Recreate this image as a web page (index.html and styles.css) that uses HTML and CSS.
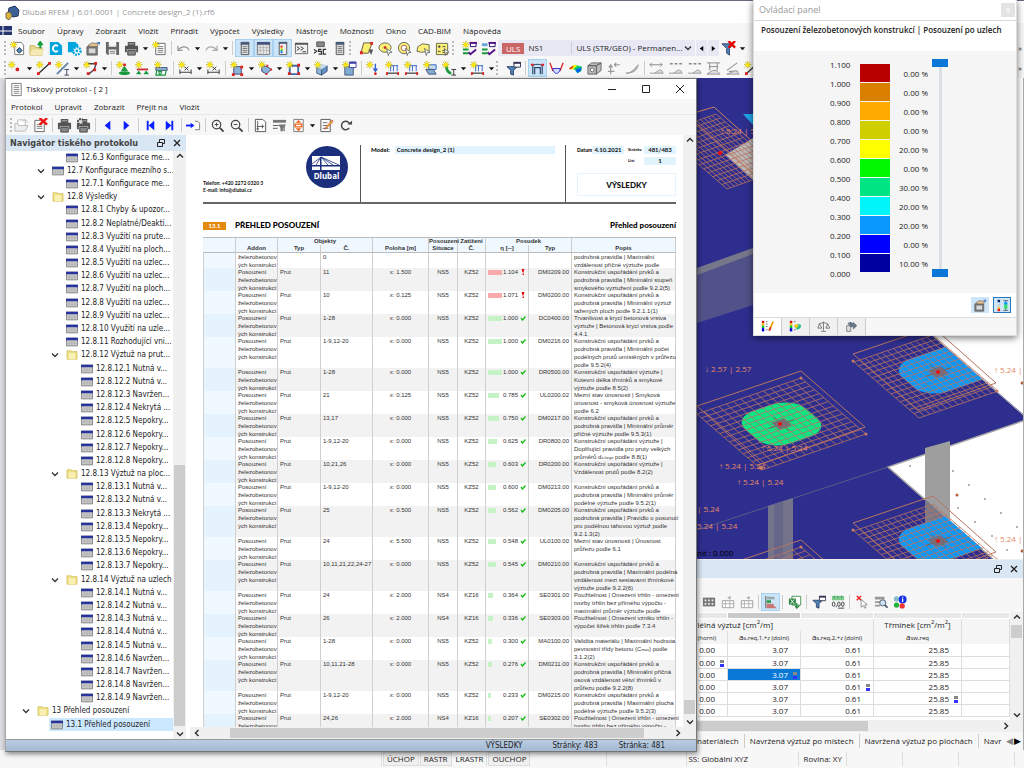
FILE: index.html
```html
<!DOCTYPE html>
<html lang="cs">
<head>
<meta charset="utf-8">
<title>Dlubal RFEM | 6.01.0001 | Concrete design_2 (1).rf6</title>
<link rel="stylesheet" href="styles.css">
</head>
<body>
<svg class="defs" aria-hidden="true">
  <symbol id="star" viewBox="0 0 16 16"><path d="M4 0v8M0 4h8M1 1l6 6M7 1L1 7" stroke="#c9b800" stroke-width="1"/><circle cx="4" cy="4" r="2" fill="#ffe800"/></symbol>
  <symbol id="caret" viewBox="0 0 8 8"><path d="M1 2.500h6L4 6z" fill="#111"/></symbol>
  <symbol id="chev" viewBox="0 0 8 8"><path d="M1 2.500l3 3 3-3" fill="none" stroke="#333" stroke-width="1.300"/></symbol>
  <symbol id="newm" viewBox="0 0 16 16"><path d="M5 1.500h7l2.500 3v10H5z" fill="#fff" stroke="#777"/><path d="M7 10l3-3 3 3-3 3z" fill="#4f86b8" stroke="#234"/><use href="#star"/></symbol>
  <symbol id="open" viewBox="0 0 16 16"><path d="M1 5h5l1 2h7v8H1z" fill="#e9d98e" stroke="#c9b45c"/><path d="M3 9h13l-2 6H1z" fill="#f5eab5"/><path d="M12 8V2M9.500 4.500L12 1l2.500 3.500" stroke="#159a3c" stroke-width="2" fill="none"/></symbol>
  <symbol id="cc" viewBox="0 0 16 16"><path d="M2 1h9l4 4v10H2z" fill="#00a5dd"/><path d="M10.500 5.500A3.200 3.200 0 1 0 10.500 10.500" fill="none" stroke="#fff" stroke-width="2"/></symbol>
  <symbol id="cg" viewBox="0 0 16 16"><path d="M1 1h8l3 3v8H1z" fill="#00a5dd"/><circle cx="10.500" cy="10.500" r="4" fill="#fff" stroke="#00a5dd" stroke-width="2.500" stroke-dasharray="2 1"/><circle cx="10.500" cy="10.500" r="1.500" fill="#00a5dd"/></symbol>
  <symbol id="box" viewBox="0 0 16 16"><path d="M1 6h11v9H1z" fill="#777" stroke="#666"/><path d="M3 8h7v5H3z" fill="#d8d8d8"/><path d="M2 5l4-3 7 1-1 3H5z" fill="#e8c090" stroke="#555" stroke-width=".7"/><path d="M11 1h4v3z" fill="#3b7ac9"/></symbol>
  <symbol id="save" viewBox="0 0 16 16"><path d="M1 1h14v14H3l-2-2z" fill="#666"/><path d="M4 1h8v5H4zM4 9h8v6H4z" fill="#f4f4f4"/><path d="M5 11h6M5 13h6" stroke="#777"/></symbol>
  <symbol id="print" viewBox="0 0 16 16"><path d="M4 1h8v4H4zM1 5h14v7h-2V9H3v3H1z" fill="#555"/><path d="M4 10h8v5H4z" fill="#888" stroke="#444"/><path d="M5 3h6" stroke="#bbb"/></symbol>
  <symbol id="docn" viewBox="0 0 16 16"><path d="M4 2.500h10v12H4z" fill="#fff" stroke="#666"/><path d="M6 6h6M6 8h6M6 10h6M6 12h6" stroke="#777"/><use href="#star"/></symbol>
  <symbol id="undo" viewBox="0 0 16 16"><path d="M2 5v5h5M2.500 9.500C6 5 12 5 14 10" fill="none" stroke="#999" stroke-width="1.300"/></symbol>
  <symbol id="redo" viewBox="0 0 16 16"><path d="M14 5v5H9M13.500 9.500C10 5 4 5 2 10" fill="none" stroke="#aaa" stroke-width="1.300"/></symbol>
  <symbol id="pan" viewBox="0 0 16 16"><path d="M4.500 1.500h8v13h-8z" fill="#ddd" stroke="#555"/><path d="M4 1h9v3H4z" fill="#4a5a7a"/><path d="M6 6h5M6 8h5M6 10h5M6 12h5" stroke="#777"/></symbol>
  <symbol id="tab" viewBox="0 0 16 16"><path d="M1.500 2.500h13v12h-13z" fill="#e4e4e4" stroke="#777"/><path d="M1 1h14v3H1z" fill="#44517d"/><path d="M4.500 4v10M8 4v10M11.500 4v10M2 7h12M2 10h12" stroke="#aaa" stroke-width=".7"/></symbol>
  <symbol id="pal" viewBox="0 0 16 16"><path d="M4.500 1.500h8v13h-8z" fill="#eee" stroke="#555"/><path d="M4 1h9v2H4z" fill="#4a5a7a"/><path d="M6 5h2v2H6z" fill="red"/><path d="M6 7h2v2H6z" fill="#f5d400"/><path d="M6 9h2v2H6z" fill="#0b3"/><path d="M6 11h2v2H6z" fill="#06f"/></symbol>
  <symbol id="con" viewBox="0 0 16 16"><path d="M1.500 2.500h13v11h-13z" fill="#f2f2f2" stroke="#666"/><path d="M1 2h14v2H1z" fill="#555"/><path d="M3 6l3 2-3 2M7 6l3 2-3 2M9 11.500h4" fill="none" stroke="#333"/></symbol>
  <symbol id="sc" viewBox="0 0 16 16"><path d="M4 1h8v5H4z" fill="#888" stroke="#555"/><path d="M1 9l3 2-3 2M9 9H6v2h3v3H6M14 9h-3v5h3" fill="none" stroke="#333" stroke-width="1.300"/></symbol>
  <symbol id="yel" viewBox="0 0 16 16"><path d="M5 2h9l-4 11H2z" fill="#f8ee70" stroke="#654" /><path d="M12 1h3v3h-3zM1 11h3v3H1z" fill="#d22"/><path d="M10 9h5l-2 6z" fill="#555"/></symbol>
  <symbol id="cir" viewBox="0 0 16 16"><ellipse cx="7.500" cy="7" rx="6.500" ry="5" fill="#fbf07a" stroke="#665"/><circle cx="7.500" cy="7" r="1.500" fill="#c22"/><path d="M9 8l6 4-3 .5-1 3z" fill="#fff" stroke="#555" stroke-width=".8"/></symbol>
  <symbol id="rin" viewBox="0 0 16 16"><circle cx="7.500" cy="7.500" r="6" fill="#fbf07a" stroke="#665"/><circle cx="7.500" cy="7.500" r="3" fill="#fff" stroke="#a66"/><path d="M9 8l6 4-3 .5-1 3z" fill="#fff" stroke="#555" stroke-width=".8"/></symbol>
  <symbol id="hul" viewBox="0 0 16 16"><path d="M2 6l5-3 7 1v7l-8 1-5-1z" fill="#fbf07a" stroke="#665"/><path d="M9 8l6 4-3 .5-1 3z" fill="#fff" stroke="#555" stroke-width=".8"/></symbol>
  <symbol id="cal" viewBox="0 0 16 16"><path d="M1.500 2.500h12v12h-12z" fill="#fbf07a" stroke="#665"/><path d="M3 6h3M4.500 4.500v3M8 6h3M3 11h3M8 10h3M8 12h3" stroke="#444"/><path d="M10 8l5 4-3 .5-1 3z" fill="#fff" stroke="#555" stroke-width=".8"/></symbol>
  <symbol id="lod" viewBox="0 0 16 16"><path d="M9 2h6v4H9z" fill="#fff" stroke="#206"/><path d="M8 1h8v2H8z" fill="#518"/><path d="M1 8h6v2H1zM1 12h6v2H1z" fill="#1a9a3a"/><path d="M7 12l2 2 6-5" fill="none" stroke="#518" stroke-width="2"/><use href="#star"/></symbol>
  <symbol id="lo2" viewBox="0 0 16 16"><path d="M9 2h6v4H9z" fill="#fff" stroke="#206"/><path d="M8 1h8v2H8z" fill="#518"/><path d="M7 12l2 2 6-5" fill="none" stroke="#518" stroke-width="2"/><path d="M1 8h6v2H1zM1 12h6v2H1z" fill="#1a9a3a"/><path d="M1 4h6" stroke="#68a4d8" stroke-width="3"/></symbol>
  <symbol id="fx" viewBox="0 0 16 16"><path d="M1 3h12L9 8v7l-3-2V8z" fill="#4d84b8" stroke="#346"/><path d="M8 0l7 7M15 0L8 7" stroke="#e00" stroke-width="2.500"/></symbol>
  <symbol id="nod" viewBox="0 0 16 16"><use href="#star"/><circle cx="10" cy="9" r="2" fill="#d22"/></symbol>
  <symbol id="lin" viewBox="0 0 16 16"><path d="M3 13L14 3" stroke="#333" stroke-width="1.500"/><path d="M1 12h3v3H1zM13 1h3v3h-3z" fill="#d22"/><use href="#star"/></symbol>
  <symbol id="mem" viewBox="0 0 16 16"><path d="M2 14L14 2" stroke="#68a" stroke-width="2"/><path d="M10 9h5M10 15h5M12.500 9v6" stroke="#446"/><use href="#star"/></symbol>
  <symbol id="arc" viewBox="0 0 16 16"><path d="M5 3h9l-2 6-6 5" fill="none" stroke="#444" stroke-width="1.500"/><path d="M12 1h3v3h-3zM11 8h3v3h-3zM4 12h3v3H4z" fill="#d22"/><use href="#star"/></symbol>
  <symbol id="sup" viewBox="0 0 16 16"><path d="M9 5l4 6H5z" fill="#1c9a40"/><ellipse cx="9" cy="13" rx="6" ry="2" fill="#1c9a40"/><circle cx="9" cy="4" r="1.700" fill="#d22"/><use href="#star"/></symbol>
  <symbol id="sp2" viewBox="0 0 16 16"><path d="M2 9h12" stroke="#c33" stroke-width="2"/><path d="M4 10l3 4H1zM12 10l3 4H9z" fill="#1c9a40"/><use href="#star"/></symbol>
  <symbol id="sp3" viewBox="0 0 16 16"><path d="M2 7h12v3H2z" fill="#8db2d6" stroke="#457"/><path d="M3 10l-1 5h4l-1-4h3l-1 4h5l1-5" fill="none" stroke="#1c9a40" stroke-width="1.300"/><use href="#star"/></symbol>
  <symbol id="dim" viewBox="0 0 16 16"><path d="M2 12h12M2 9v5M14 9v5" stroke="#333"/><path d="M7 6l4 4M11 6l-4 4" stroke="#333"/><use href="#star"/></symbol>
  <symbol id="srf" viewBox="0 0 16 16"><path d="M4 6h8v8H4z" fill="#89b3d8" stroke="#447"/><path d="M2 13h3v3H2zM11 13h3v3h-3zM11 5h3v3h-3z" fill="#d22"/><use href="#star"/></symbol>
  <symbol id="sr2" viewBox="0 0 16 16"><path d="M4 5l6 1 4 3-5 5-5-3z" fill="#89b3d8" stroke="#447"/><path d="M13 8h2v2h-2zM8 13h2v2H8zM9 4h2v2H9z" fill="#d22"/><use href="#star"/></symbol>
  <symbol id="sr3" viewBox="0 0 16 16"><path d="M4 5h9v9H4z" fill="#fff" stroke="#3a6ea8" stroke-width="2"/><path d="M2 12h3v3H2zM12 12h3v3h-3zM12 3h3v3h-3z" fill="#d22"/><use href="#star"/></symbol>
  <symbol id="sol" viewBox="0 0 16 16"><path d="M3 7l5 2v6l-5-2z" fill="#8fb8dd" stroke="#457"/><path d="M8 9l6-4v6l-6 4z" fill="#5d92c6" stroke="#457"/><path d="M3 7l6-4 5 2-6 4z" fill="#c2dbf0"/><use href="#star"/></symbol>
  <symbol id="cub" viewBox="0 0 16 16"><path d="M3 6h9v9H3z" fill="#7faad4" stroke="#457"/><path d="M8 1h7v6H8z" fill="#fff" stroke="#44a"/><path d="M8 1h7v2H8z" fill="#44a"/><use href="#star"/></symbol>
  <symbol id="ld1" viewBox="0 0 16 16"><path d="M10 3v8M8 8l2 3 2-3" stroke="#36c" stroke-width="1.500" fill="none"/><circle cx="10" cy="13.500" r="1.500" fill="#d22"/><use href="#star"/></symbol>
  <symbol id="ld2" viewBox="0 0 16 16"><path d="M5 5h9M6 5v6M9 5v6M13 5v6" stroke="#36c"/><path d="M2 13h13" stroke="#555" stroke-width="1.500"/><path d="M1 12h2v3H1zM13 12h2v3h-2z" fill="#d22"/><use href="#star"/></symbol>
  <symbol id="ld3" viewBox="0 0 16 16"><path d="M6 4h8v5H6z" fill="#c6daee" stroke="#36c"/><path d="M3 9h8l3 5H6z" fill="#83abd2" stroke="#457"/><use href="#star"/></symbol>
  <symbol id="ld4" viewBox="0 0 16 16"><path d="M4 4c1 7 3 9 6 9" stroke="#1c9a40" stroke-width="3" fill="none"/><path d="M10 9h5M10 15h5M12.500 9v6" stroke="#333"/><use href="#star"/></symbol>
  <symbol id="fil" viewBox="0 0 16 16"><path d="M1 6h11L8 10v5l-3-1v-4z" fill="#4d84b8" stroke="#346"/><path d="M8.500 1.500h7v5h-7z" fill="#fff" stroke="#335"/><path d="M8 1h8v2H8z" fill="#335"/></symbol>
  <symbol id="def" viewBox="0 0 16 16"><path d="M3 14V5c2-2 8-2 10 0v9M5 14V7h6v7" fill="none" stroke="#26406a" stroke-width="1.200"/><path d="M1 3h3v2H1zM12 3h3v2h-3z" fill="#d22"/></symbol>
  <symbol id="mom" viewBox="0 0 16 16"><path d="M1 2l3 8 4-2 4 2 3-8" fill="none" stroke="#d22" stroke-width="1.500"/><path d="M4 8c1 7 7 7 8 0z" fill="#d0dcff" stroke="#33c"/></symbol>
  <symbol id="rbw" viewBox="0 0 16 16"><path d="M1 8l6-4 8 2-1 5-4 2-3-4z" fill="#0c6"/><path d="M1 8l6-4 3 1-5 4z" fill="#ff0"/><path d="M1 8l4-3 1 1-3 3z" fill="#f30"/><path d="M8 9l6-2v3l-4 3z" fill="#06f"/></symbol>
  <symbol id="msh" viewBox="0 0 16 16"><path d="M1 5h9v9H1zM1 5l4-3h10l-5 3zM15 2v8l-5 4V5z" fill="#bbb" stroke="#666"/><circle cx="5.500" cy="9.500" r="2" fill="#fff" stroke="#666"/></symbol>
  <symbol id="arr" viewBox="0 0 16 16"><path d="M5 14V5M3 7l2-3 2 3M2 11h7M15 4H9M11 2L9 4l2 2" fill="none" stroke="#999" stroke-width="1.300"/></symbol>
  <symbol id="wdg" viewBox="0 0 16 16"><path d="M1 13c5 0 8-3 13-9-1 6-5 9-13 9z" fill="#bbb" stroke="#999"/></symbol>
  <symbol id="sec" viewBox="0 0 16 16"><path d="M1 4h13M3 2L1 4l2 2M12 2l2 2-2 2" fill="none" stroke="#888"/><path d="M1 13h14c-1-4-4-4-6-2l-3 2" fill="#ddd" stroke="#999"/></symbol>
  <symbol id="se2" viewBox="0 0 16 16"><path d="M2 3h3M7 3h3M12 3h3" stroke="#888" stroke-width="1.500"/><path d="M1 13h14c-1-4-4-4-6-2l-3 2" fill="#ddd" stroke="#999"/></symbol>
  <symbol id="se3" viewBox="0 0 16 16"><path d="M1 2h14M3 6h10M4 2v8M12 2v8" stroke="#888"/><path d="M1 14h14l-4-4H7z" fill="#ddd" stroke="#999"/></symbol>
  <symbol id="se4" viewBox="0 0 16 16"><path d="M2 10L13 2M4 11h10" stroke="#999" stroke-width="1.300"/><path d="M2 14h13l-3-4z" fill="#ddd" stroke="#999"/></symbol>
  <symbol id="doc" viewBox="0 0 16 16"><path d="M3 1.500h10v13H3z" fill="#fff" stroke="#777"/><path d="M5 4h6M5 6h6M5 8h6M5 10h6M5 12h6" stroke="#888"/></symbol>
  <symbol id="popen" viewBox="0 0 16 16"><path d="M4 2h8v6H4z" fill="#fff" stroke="#bbb"/><path d="M1 6h3l1 2h10l-3 6H1z" fill="#eee" stroke="#bbb"/><path d="M9 4c2-3 5-2 5 1" stroke="#bbb" fill="none"/></symbol>
  <symbol id="pdel" viewBox="0 0 16 16"><path d="M2 2.500h10v12H2z" fill="#fff" stroke="#666"/><path d="M4 7h6M4 9h6M4 11h6" stroke="#777"/><path d="M7 0l8 7M15 0L7 7" stroke="#e11" stroke-width="2.500"/></symbol>
  <symbol id="pset" viewBox="0 0 16 16"><use href="#print"/><circle cx="5" cy="4" r="3" fill="#ddd" stroke="#444" stroke-width="2" stroke-dasharray="2 1"/></symbol>
  <symbol id="prv" viewBox="0 0 16 16"><path d="M11 3v10L5 8z" fill="#0a1fff"/></symbol>
  <symbol id="nxt" viewBox="0 0 16 16"><path d="M5 3v10l6-5z" fill="#0a1fff"/></symbol>
  <symbol id="fst" viewBox="0 0 16 16"><path d="M12 3v10L6 8zM4 3h2v10H4z" fill="#0a1fff"/></symbol>
  <symbol id="lst" viewBox="0 0 16 16"><path d="M4 3v10l6-5zM10 3h2v10h-2z" fill="#0a1fff"/></symbol>
  <symbol id="gto" viewBox="0 0 16 16"><path d="M0 8h6" stroke="#0a1fff" stroke-width="2"/><path d="M5 5l4 3-4 3z" fill="#0a1fff"/><path d="M9.500 3.500h3l2 2v7h-5" fill="#fff" stroke="#777"/></symbol>
  <symbol id="zin" viewBox="0 0 16 16"><circle cx="7" cy="7" r="4.500" fill="none" stroke="#444" stroke-width="1.300"/><path d="M10.500 10.500l4 4" stroke="#444" stroke-width="2"/><path d="M5 7h4M7 5v4" stroke="#444"/></symbol>
  <symbol id="zou" viewBox="0 0 16 16"><circle cx="7" cy="7" r="4.500" fill="none" stroke="#444" stroke-width="1.300"/><path d="M10.500 10.500l4 4" stroke="#444" stroke-width="2"/><path d="M5 7h4" stroke="#444"/></symbol>
  <symbol id="pg" viewBox="0 0 16 16"><path d="M2.500 1.500h8l3 3v10h-11z" fill="#fff" stroke="#555"/><path d="M5 3v10M4 11l1 2 1-2M4 9h8M10 7v4" stroke="#555" fill="none"/></symbol>
  <symbol id="hd" viewBox="0 0 16 16"><path d="M1 2h14v3H1z" fill="#777"/><path d="M1 8h6M1 11h5M13 8v6" stroke="#555"/><path d="M7 7h8l-3 4v3H9v-3z" fill="#777"/></symbol>
  <symbol id="fit" viewBox="0 0 16 16"><path d="M3 1.500h10v13H3z" fill="#fff" stroke="#777"/><path d="M8 2l3 3H5zM8 14l3-3H5z" fill="#e8641b"/><path d="M4.500 6.500h7v3h-7z" fill="#fff" stroke="#e8641b" stroke-width="1.500"/></symbol>
  <symbol id="edt" viewBox="0 0 16 16"><path d="M2 1.500h10v13H2z" fill="#fff" stroke="#555"/><path d="M4 5h5M4 8h5M4 11h6" stroke="#666"/><path d="M14 2l1 2-7 7-2 1 1-2z" fill="#f2b632" stroke="#b33" stroke-width=".6"/></symbol>
  <symbol id="ref" viewBox="0 0 16 16"><path d="M12 10.500a4.500 4.500 0 1 1 .5-4" fill="none" stroke="#444" stroke-width="1.500"/><path d="M10 7h5V3z" fill="#444"/></symbol>
  <symbol id="t" viewBox="0 0 14 10"><path d="M.5.500h13v9H.5z" fill="#d2d2d2" stroke="#777"/><path d="M0 0h14v3H0z" fill="#26349c"/><path d="M4 3v6M7 3v6M10 3v6M1 5h12M1 7h12" stroke="#aaa" stroke-width=".7"/></symbol>
  <symbol id="f" viewBox="0 0 14 12"><path d="M1 1h5l1 1h6v9H1z" fill="#efe28a" stroke="#d2bf5a"/><path d="M3 4h8v7H3z" fill="#f8f0b4"/></symbol>
  <symbol id="res" viewBox="0 0 10 10"><path d="M1.500 4.500h5v4h-5zM3.500 4v-2.500h5v4h-2" fill="none" stroke="#222"/></symbol>
  <symbol id="x" viewBox="0 0 10 10"><path d="M2 2l6 6M8 2l-6 6" stroke="#222" stroke-width="1.300"/></symbol>
  <symbol id="up" viewBox="0 0 10 10"><path d="M2 6.500l3-3 3 3" fill="none" stroke="#333" stroke-width="1.500"/></symbol>
  <symbol id="dn" viewBox="0 0 10 10"><path d="M2 3.500l3 3 3-3" fill="none" stroke="#333" stroke-width="1.500"/></symbol>
  <symbol id="lf" viewBox="0 0 10 10"><path d="M6.500 2l-3 3 3 3" fill="none" stroke="#333" stroke-width="1.500"/></symbol>
  <symbol id="rt" viewBox="0 0 10 10"><path d="M3.500 2l3 3-3 3" fill="none" stroke="#333" stroke-width="1.500"/></symbol>
  <symbol id="ok" viewBox="0 0 6 6"><path d="M1 3l1.500 2L5.500 1.500" fill="none" stroke="#16b816" stroke-width="1.300"/></symbol>
  <symbol id="ng" viewBox="0 0 6 6"><path d="M1.500 0h3L3.500 3.500h-1zM2.500 4.500h1.500V6H2.500z" fill="#e51414"/></symbol>
  <symbol id="tg" viewBox="0 0 16 16"><path d="M1 3h14v10H1z" fill="#777"/><path d="M3 5h2v2H3zM7 5h2v2H7zM11 5h2v2h-2zM3 9h2v2H3zM7 9h2v2H7zM11 9h2v2h-2z" fill="#eee"/></symbol>
  <symbol id="t2" viewBox="0 0 16 16"><path d="M1.500 6.500h13v8h-13z" fill="#fff" stroke="#999"/><path d="M1 10h14M5 7v7M10 7v7" stroke="#aaa"/><path d="M7 3l4-2v4z" fill="#aaa"/></symbol>
  <symbol id="bar" viewBox="0 0 16 16"><path d="M2 1v14" stroke="#555"/><path d="M3 2h9v3H3z" fill="#9aa"/><path d="M3 6h5v3H3z" fill="#2b9a4c"/><path d="M3 10h8v2l4 3H3z" fill="#c77"/></symbol>
  <symbol id="xls" viewBox="0 0 16 16"><path d="M4.500 1.500h10v10h-10z" fill="#fff" stroke="#3a8a4a"/><path d="M1 4h8v7H1z" fill="#2f8a45"/><path d="M3 5l4 5M7 5l-4 5" stroke="#fff"/><path d="M10 9v5M8 12l2 3 3-3" stroke="#2f8a45" stroke-width="1.500" fill="none"/></symbol>
  <symbol id="dec" viewBox="0 0 16 16"><path d="M1 1h14v5H1z" fill="#7cc98a"/><path d="M4 1v2M8 1v2M12 1v2" stroke="#286"/><ellipse cx="3" cy="10.500" rx="1.500" ry="2.500" fill="none" stroke="#333"/><ellipse cx="9" cy="10.500" rx="1.500" ry="2.500" fill="none" stroke="#333"/><ellipse cx="13.500" cy="10.500" rx="1.500" ry="2.500" fill="none" stroke="#333"/><path d="M6 12v2M8 15h7" stroke="#333"/></symbol>
  <symbol id="sel" viewBox="0 0 16 16"><path d="M2 1l5 5M7 1L2 6" stroke="#e11" stroke-width="1.500"/><path d="M7 5l7 6-3 .5 1.500 3-1.500.5-1.500-3L7 14z" fill="#fff" stroke="#888"/></symbol>
  <symbol id="fnd" viewBox="0 0 16 16"><path d="M1 2h11v3H1zM1 7h6v2H1zM1 11h6v2H1z" fill="#999"/><circle cx="10" cy="9" r="3.500" fill="#cfe2f4" stroke="#456"/><path d="M12.500 11.500l3 3" stroke="#456" stroke-width="2"/></symbol>
  <symbol id="inf" viewBox="0 0 16 16"><circle cx="4" cy="4.500" r="3" fill="#8bc"/><circle cx="11" cy="5" r="4.500" fill="#1430e8"/><path d="M11 4v4M11 2v1" stroke="#fff" stroke-width="1.500"/><circle cx="4" cy="11.500" r="3" fill="#1fb33a"/><circle cx="10.500" cy="12.500" r="3" fill="#e33"/></symbol>
  <symbol id="scl" viewBox="0 0 16 16"><path d="M1 1h3v3H1z" fill="#d11"/><path d="M1 4h3v3H1z" fill="#fb0"/><path d="M1 7h3v3H1z" fill="#0b3"/><path d="M1 10h3v4H1z" fill="#00d"/><path d="M6 2h2M6 5h2M6 8h2M6 12h2" stroke="#555"/><path d="M10 13l5-11" stroke="#e90" stroke-width="2"/><path d="M10 13l2-4" stroke="#d22" stroke-width="2"/></symbol>
  <symbol id="sc2" viewBox="0 0 16 16"><path d="M1 1h3v3H1z" fill="#d11"/><path d="M1 4h3v3H1z" fill="#fb0"/><path d="M1 7h3v3H1z" fill="#0b3"/><path d="M1 10h3v4H1z" fill="#00d"/><path d="M6 2h2M6 12h2" stroke="#555"/><path d="M6 7l5-2 4 1-1 4-4 2z" fill="#2b9"/><path d="M6 7l4-2 2 2-3 3z" fill="#fc0"/></symbol>
  <symbol id="bal" viewBox="0 0 16 16"><path d="M8 2v11M5 14h6M2 5l6-2 6 2M3 5l-2 5h5zM13 5l-2 5h5z" fill="none" stroke="#666"/></symbol>
  <symbol id="mv" viewBox="0 0 16 16"><path d="M2 7h5v7H2z" fill="#ddd" stroke="#777"/><path d="M3 4l4-2 3 2v-2l5 5-5 5v-3H7z" fill="#678"/></symbol>
  <symbol id="rng" viewBox="0 0 16 16"><path d="M2 1h3v3H2z" fill="#026"/><path d="M2 6h3v3H2z" fill="#ccc"/><path d="M2 10h3v2H2z" fill="#fb0"/><path d="M2 12h3v3H2z" fill="#e11"/><path d="M9 2h6M9 14h6M12 2v12" stroke="#456"/><path d="M10 4h4v3h-4z" fill="#09f"/><path d="M10 7h4v5h-4z" fill="#3d6"/></symbol>
  <symbol id="grid" viewBox="0 0 1 1" overflow="visible"><path d="M0 0H1V1H0ZM0 .07H1M0 .14H1M0 .21H1M0 .28H1M0 .35H1M0 .42H1M0 .5H1M0 .57H1M0 .64H1M0 .71H1M0 .78H1M0 .85H1M0 .92H1M.07 0V1M.14 0V1M.21 0V1M.28 0V1M.35 0V1M.42 0V1M.5 0V1M.57 0V1M.64 0V1M.71 0V1M.78 0V1M.85 0V1M.92 0V1" fill="none" stroke="#b87462" stroke-opacity=".8" stroke-width="1" vector-effect="non-scaling-stroke"/></symbol>
</svg>

<div class="app">
  <header class="app-title"><svg class="ic"><path d="M4 3l6-2 4 4-1 6-5 1-5-4z" fill="#3b5f96" stroke="#1d3560"/><path d="M1 8l4-1 2 4-3 4-3-2z" fill="#d9b53a" stroke="#765"/></svg>Dlubal RFEM | 6.01.0001 | Concrete design_2 (1).rf6</header>
  <nav class="menu app-menu">
    <svg class="flag" viewBox="0 0 12 9"><path d="M0 0h12v9H0z" fill="#25346f"/><path d="M0 5h12M3 0v9" stroke="#fff"/></svg>
    <a href="#">Soubor</a><a href="#">Úpravy</a><a href="#">Zobrazit</a><a href="#">Vložit</a><a href="#">Přiřadit</a><a href="#">Výpočet</a><a href="#">Výsledky</a><a href="#">Nástroje</a><a href="#">Možnosti</a><a href="#">Okno</a><a href="#">CAD-BIM</a><a href="#">Nápověda</a>
  </nav>
  <div class="bar">
    <i class="grip"></i>
    <button class="b" aria-label="Nový"><svg class="ic"><use href="#newm"/></svg></button>
    <button class="b" aria-label="Otevřít"><svg class="ic"><use href="#open"/></svg></button>
    <button class="b" aria-label="Centrum"><svg class="ic"><use href="#cc"/></svg></button>
    <button class="b" aria-label="Nastavení"><svg class="ic"><use href="#cg"/></svg></button>
    <button class="b" aria-label="Bloky"><svg class="ic"><use href="#box"/></svg></button>
    <button class="b" aria-label="Uložit"><svg class="ic"><use href="#save"/></svg></button>
    <button class="b" aria-label="Tisk"><svg class="ic"><use href="#print"/></svg></button>
    <button class="c" aria-label="Volby tisku"><svg><use href="#caret"/></svg></button>
    <button class="b" aria-label="Nový protokol"><svg class="ic"><use href="#docn"/></svg></button>
    <i class="sep"></i>
    <button class="b" aria-label="Zpět"><svg class="ic"><use href="#undo"/></svg></button>
    <button class="c" aria-label="Historie zpět"><svg><use href="#caret"/></svg></button>
    <button class="b" aria-label="Znovu"><svg class="ic"><use href="#redo"/></svg></button>
    <button class="c" aria-label="Historie znovu"><svg><use href="#caret"/></svg></button>
    <i class="sep"></i>
    <button class="b on" aria-label="Navigátor"><svg class="ic"><use href="#pan"/></svg></button>
    <button class="b on" aria-label="Tabulky"><svg class="ic"><use href="#tab"/></svg></button>
    <button class="b on" aria-label="Panel"><svg class="ic"><use href="#pal"/></svg></button>
    <button class="b" aria-label="Konzole"><svg class="ic"><use href="#con"/></svg></button>
    <button class="b" aria-label="Skript"><svg class="ic"><use href="#sc"/></svg></button>
    <button class="b" aria-label="Seznam"><svg class="ic"><use href="#pan"/></svg></button>
    <i class="grip"></i>
    <button class="b" aria-label="Výběr plochy"><svg class="ic"><use href="#yel"/></svg></button>
    <button class="b" aria-label="Výběr elipsou"><svg class="ic"><use href="#cir"/></svg></button>
    <button class="b" aria-label="Výběr mezikružím"><svg class="ic"><use href="#rin"/></svg></button>
    <button class="b" aria-label="Výběr obrysem"><svg class="ic"><use href="#hul"/></svg></button>
    <button class="b" aria-label="Výběr podle"><svg class="ic"><use href="#cal"/></svg></button>
    <i class="grip"></i>
    <button class="b" aria-label="Nové zatížení"><svg class="ic"><use href="#lod"/></svg></button>
    <button class="b" aria-label="Upravit zatížení"><svg class="ic"><use href="#lo2"/></svg></button>
    <div class="combo"><span class="uls">ULS</span><span class="ns">NS1</span>
      <select aria-label="Návrhová situace"><option>ULS (STR/GEO) - Permanen...</option></select>
      <svg><use href="#chev"/></svg></div>
    <button class="arw" aria-label="Předchozí"><svg viewBox="0 0 8 8"><path d="M6 1v6L2 4z"/></svg></button>
    <button class="arw" aria-label="Další"><svg viewBox="0 0 8 8"><path d="M2 1v6l4-3z"/></svg></button>
    <button class="b" aria-label="Zrušit filtr"><svg class="ic"><use href="#fx"/></svg></button>
    <button class="c" aria-label="Volby filtru"><svg><use href="#caret"/></svg></button>
    <span class="more">»</span>
  </div>
  <div class="bar">
    <i class="grip tight"></i>
    <button class="b" aria-label="Uzel"><svg class="ic"><use href="#nod"/></svg></button>
    <button class="c" aria-label="Typ uzlu"><svg><use href="#caret"/></svg></button>
    <button class="b" aria-label="Linie"><svg class="ic"><use href="#lin"/></svg></button>
    <button class="b" aria-label="Prut"><svg class="ic"><use href="#mem"/></svg></button>
    <button class="c" aria-label="Typ prutu"><svg><use href="#caret"/></svg></button>
    <button class="b" aria-label="Polylinie"><svg class="ic"><use href="#arc"/></svg></button>
    <button class="c" aria-label="Typ linie"><svg><use href="#caret"/></svg></button>
    <i class="sep"></i>
    <button class="b" aria-label="Uzlová podpora"><svg class="ic"><use href="#sup"/></svg></button>
    <button class="b" aria-label="Liniová podpora"><svg class="ic"><use href="#sp2"/></svg></button>
    <button class="b" aria-label="Plošná podpora"><svg class="ic"><use href="#sp3"/></svg></button>
    <i class="sep"></i>
    <button class="b" aria-label="Kóta"><svg class="ic"><use href="#dim"/></svg></button>
    <button class="c" aria-label="Typ kóty"><svg><use href="#caret"/></svg></button>
    <button class="b" aria-label="Kóty"><svg class="ic"><use href="#dim"/></svg></button>
    <i class="sep"></i>
    <button class="b" aria-label="Plocha"><svg class="ic"><use href="#srf"/></svg></button>
    <button class="c" aria-label="Typ plochy"><svg><use href="#caret"/></svg></button>
    <button class="b" aria-label="Plocha obrysem"><svg class="ic"><use href="#sr2"/></svg></button>
    <button class="c" aria-label="Typ obrysu"><svg><use href="#caret"/></svg></button>
    <button class="b" aria-label="Otvor"><svg class="ic"><use href="#sr3"/></svg></button>
    <button class="c" aria-label="Typ otvoru"><svg><use href="#caret"/></svg></button>
    <button class="b" aria-label="Těleso"><svg class="ic"><use href="#sol"/></svg></button>
    <button class="c" aria-label="Typ tělesa"><svg><use href="#caret"/></svg></button>
    <button class="b" aria-label="Blok"><svg class="ic"><use href="#cub"/></svg></button>
    <i class="sep"></i>
    <button class="b" aria-label="Uzlové zatížení"><svg class="ic"><use href="#ld1"/></svg></button>
    <button class="b" aria-label="Prutové zatížení"><svg class="ic"><use href="#ld2"/></svg></button>
    <button class="b" aria-label="Liniové zatížení"><svg class="ic"><use href="#ld2"/></svg></button>
    <button class="b" aria-label="Plošné zatížení"><svg class="ic"><use href="#ld3"/></svg></button>
    <button class="b" aria-label="Imperfekce"><svg class="ic"><use href="#ld4"/></svg></button>
    <button class="c" aria-label="Typ imperfekce"><svg><use href="#caret"/></svg></button>
    <button class="b" aria-label="Generátor"><svg class="ic"><use href="#ld2"/></svg></button>
    <button class="c" aria-label="Typ generátoru"><svg><use href="#caret"/></svg></button>
    <i class="grip"></i>
    <button class="b" aria-label="Filtr"><svg class="ic"><use href="#fil"/></svg></button>
    <i class="sep"></i>
    <button class="b on" aria-label="Deformace"><svg class="ic"><use href="#def"/></svg></button>
    <button class="b" aria-label="Momenty"><svg class="ic"><use href="#mom"/></svg></button>
    <button class="b" aria-label="Izoplochy"><svg class="ic"><use href="#rbw"/></svg></button>
    <button class="b" aria-label="Síť"><svg class="ic"><use href="#msh"/></svg></button>
    <button class="b" aria-label="Reakce"><svg class="ic"><use href="#arr"/></svg></button>
    <button class="b" aria-label="Průběh"><svg class="ic"><use href="#wdg"/></svg></button>
    <i class="sep"></i>
    <button class="b" aria-label="Řez 1"><svg class="ic"><use href="#sec"/></svg></button>
    <button class="b" aria-label="Řez 2"><svg class="ic"><use href="#se2"/></svg></button>
    <button class="b" aria-label="Řez 3"><svg class="ic"><use href="#se2"/></svg></button>
    <button class="b" aria-label="Řez 4"><svg class="ic"><use href="#se3"/></svg></button>
    <button class="b" aria-label="Řez 5"><svg class="ic"><use href="#se4"/></svg></button>
    <button class="b" aria-label="Nový řez"><svg class="ic"><use href="#lin"/></svg></button>
    <span class="more">»</span>
  </div>

  <main class="work">
    <div class="dock"></div>
    <section class="side">
      <div class="view">
        <svg viewBox="697 78 326 481" preserveAspectRatio="xMinYMin slice">
          <path d="M697 78H1023V559H697z" fill="#fff"/>
          <g fill="#9a9a9a"><circle cx="953" cy="471" r="1"/><circle cx="969" cy="485" r="1"/><circle cx="985" cy="499" r="1"/><circle cx="1001" cy="513" r="1"/><circle cx="1017" cy="527" r="1"/><circle cx="958" cy="508" r="1"/><circle cx="975" cy="522" r="1"/><circle cx="992" cy="536" r="1"/><circle cx="1007" cy="550" r="1"/><circle cx="910" cy="466" r="1"/></g>
          <g fill="#b5613c"><circle cx="957" cy="495" r="1.500"/><circle cx="1022" cy="383" r="1.500"/><circle cx="1022" cy="551" r="1.500"/></g>
          <path d="M925 450l25-6v94h-25z" fill="#a5a5a5"/><path d="M925 450l8-2v88h-8z" fill="#979797"/>
          <path d="M697 78H753L933 336 1023 414V421L888 467 993 559H697z" fill="#2e2e8e"/>
          <path d="M1023 421L888 467l105 92" fill="none" stroke="#a9a9a9" stroke-width="1.500"/>
          <path d="M888 467L697 530" stroke="#5c5c84" fill="none"/>
          <path d="M933 336l90 79" stroke="#aaa" fill="none"/>
          <path d="M925 499l25 22-13 3-12 3z" fill="#77778c"/>
          <path d="M925 448l25-7v80l-25-22z" fill="#9e9e9e"/>
          <path d="M697 268l56-20v57l-56 18z" fill="#52528a"/><path d="M697 268l56-20v6l-56 21z" fill="#77778c"/>
          <path d="M753 138v42l-28-25z" fill="#b9b9b9"/><path d="M743 114h10v11z" fill="#1fa6e8"/>
          <path d="M768 506l25-8v61h-25z" fill="#73738c"/><path d="M774 504l9-3v58h-9z" fill="#66668a"/>
          <g transform="matrix(54 -19 65 56 662 133)"><use href="#grid" width="1" height="1"/></g>
          <path d="M697 112l17-5 39 35M697 124l56 49" fill="none" stroke="#c97e60"/><circle cx="720" cy="153" r="2" fill="#f00"/>
          <g id="n1">
            <g transform="matrix(104 -36 65 56 697 414)"><rect x=".21" y=".21" width=".58" height=".58" rx=".2" fill="#0be584"/><use href="#grid" width="1" height="1"/><path d="M.38 .5H.62M.5 .38V.62" stroke="#666" stroke-width="1" vector-effect="non-scaling-stroke"/><path d="M.44 .44h.12v.12h-.12z" fill="#7d6a72"/></g>
            <path d="M697 406l104-35 64 56-104 37z" fill="none" stroke="#b87462"/><circle cx="780" cy="424" r="1.800" fill="#f00"/><g fill="#c97e60"><circle cx="801" cy="378" r="1.500"/><circle cx="866" cy="434" r="1.500"/><circle cx="761" cy="468" r="2"/></g>
          </g>
          <g id="n2">
            <g transform="matrix(104 -36 65 56 854 362)"><path d="M.74 .21H.41A.2 .2 0 0 0 .21 .41V.59A.2 .2 0 0 0 .41 .79H.74Z" fill="#0a98fb"/></g>
            <g transform="matrix(79 -27 65 56 854 362)"><use href="#grid" width="1" height="1"/></g>
            <g transform="matrix(104 -36 65 56 854 362)"><path d="M.38 .5H.62M.5 .38V.62" stroke="#666" stroke-width="1" vector-effect="non-scaling-stroke"/><path d="M.44 .44h.12v.12h-.12z" fill="#7d6a72"/></g>
            <path d="M853 354l80-27 63 56-78 27z" fill="none" stroke="#b87462"/><circle cx="938" cy="372" r="1.800" fill="#f00"/><circle cx="853" cy="361" r="1.500" fill="#c97e60"/><circle cx="997" cy="391" r="1.500" fill="#c97e60"/>
          </g>
          <use href="#n1" y="169"/><use href="#n2" y="169"/>
          <g class="lab"><text x="720" y="134">↑ 5.24 | 5.24</text><text x="705" y="372">↓ 2.57 | 2.57</text><text x="761" y="451">↑ 5.24 | 5.24</text><text x="719" y="469">↑ 5.24 | 5.24</text><text x="737" y="485">↑ 5.24 | 5.24</text><text x="697" y="512">| 5.24</text><text x="697" y="529">5.24 | 5.24</text><text x="994" y="373">↑ 5.24 |</text><text x="994" y="542">↑ 5.24 |</text></g>
          <text class="lim" x="697" y="556">nit : 0.000</text>
        </svg>
      </div>
      <div class="res">
        <div class="res-head"><button aria-label="Obnovit"><svg><use href="#res"/></svg></button><button aria-label="Zavřít"><svg><use href="#x"/></svg></button></div>
        <div class="bar res-bar">
          <button class="b" aria-label="Tabulka"><svg class="ic"><use href="#tg"/></svg></button>
          <button class="b" aria-label="Vlevo"><svg class="ic"><use href="#t2"/></svg></button>
          <button class="b" aria-label="Vpravo"><svg class="ic"><use href="#t2"/></svg></button>
          <i class="sep"></i>
          <button class="b on" aria-label="Graf"><svg class="ic"><use href="#bar"/></svg></button>
          <i class="sep"></i>
          <button class="b" aria-label="Export"><svg class="ic"><use href="#xls"/></svg></button>
          <i class="sep"></i>
          <button class="b" aria-label="Filtr"><svg class="ic"><use href="#fil"/></svg></button>
          <button class="b" aria-label="Desetinná místa"><svg class="ic"><use href="#dec"/></svg></button>
          <i class="sep"></i>
          <button class="b" aria-label="Výběr"><svg class="ic"><use href="#sel"/></svg></button>
          <button class="b" aria-label="Hledat"><svg class="ic"><use href="#fnd"/></svg></button>
          <button class="b" aria-label="Informace"><svg class="ic"><use href="#inf"/></svg></button>
        </div>
        <div class="grid-wrap">
          <table class="rt">
            <colgroup><col class="r0"><col class="r1"><col class="r1"><col class="r2"><col></colgroup>
            <thead>
              <tr class="strip"><th></th><th class="dk"></th><th></th><th></th><th></th></tr>
              <tr class="g"><th colspan="3" class="lft">lélná výztuž [cm<sup>2</sup>/m]</th><th>Třmínek [cm<sup>2</sup>/m<sup>2</sup>]</th><th></th></tr>
              <tr class="h"><th class="lft"><small>(horní)</small></th><th>a<small>s,req,1,+z (dolní)</small></th><th>a<small>s,req,2,+z (dolní)</small></th><th>a<small>sw,req</small></th><th></th></tr>
            </thead>
            <tbody>
              <tr><td>0.00<i></i></td><td>3.07<i></i></td><td>0.61<i></i></td><td>25.85<i></i></td><td></td></tr>
              <tr><td>0.00<i class="m"></i></td><td>3.07<i></i></td><td>0.61<i></i></td><td>25.85<i></i></td><td></td></tr>
              <tr><td>0.00<i></i></td><td class="cur">3.07<i class="m"></i></td><td>0.61<i></i></td><td>25.85<i></i></td><td></td></tr>
              <tr><td>0.00<i></i></td><td>3.07<i></i></td><td>0.61<i class="m"></i></td><td>25.85<i></i></td><td></td></tr>
              <tr><td>0.00<i></i></td><td>3.07<i></i></td><td>0.61<i></i></td><td>25.85<i class="m"></i></td><td></td></tr>
              <tr><td>0.00<i></i></td><td>3.07<i></i></td><td>0.61<i></i></td><td>25.85<i></i></td><td></td></tr>
            </tbody>
          </table>
          <div class="vs"><svg><use href="#up"/></svg><b class="t1"></b><svg><use href="#dn"/></svg></div>
        </div>
        <div class="hs"><b></b><svg><use href="#rt"/></svg></div>
        <div class="tabs"><a href="#">nateriálech</a><a href="#">Navržená výztuž po místech</a><a href="#">Navržená výztuž po plochách</a><a href="#">Navr</a><span class="tn">◀</span><span class="tn k">▶</span></div>
      </div>
    </section>
  </main>
  <footer class="status"><span class="s-lead"></span><span class="bx">ÚCHOP</span><span class="bx">RASTR</span><span>LRASTR</span><span class="bx">OUCHOP</span><span class="w76"></span><span class="w80"></span><span class="w112">SS: Globální XYZ</span><span class="w48">Rovina: XY</span><span class="w56"></span><span class="w56"></span><span class="w56"></span></footer>
</div>

<section class="win">
  <header class="win-title"><svg class="ic"><use href="#doc"/></svg><span>Tiskový protokol - [ 2 ]</span>
    <button aria-label="Minimalizovat"><svg viewBox="0 0 10 10"><path d="M1 5.500h8" stroke="#222"/></svg></button>
    <button aria-label="Maximalizovat"><svg viewBox="0 0 10 10"><path d="M1.500 1.500h7v7h-7z" fill="none" stroke="#222"/></svg></button>
    <button aria-label="Zavřít"><svg viewBox="0 0 10 10"><path d="M1 1l8 8M9 1L1 9" stroke="#222"/></svg></button>
  </header>
  <nav class="menu win-menu"><a href="#">Protokol</a><a href="#">Upravit</a><a href="#">Zobrazit</a><a href="#">Přejít na</a><a href="#">Vložit</a></nav>
  <div class="bar win-bar">
    <i class="grip tight"></i>
    <button class="b" aria-label="Otevřít"><svg class="ic"><use href="#popen"/></svg></button>
    <button class="b" aria-label="Smazat"><svg class="ic"><use href="#pdel"/></svg></button>
    <i class="sep"></i>
    <button class="b" aria-label="Tisk"><svg class="ic"><use href="#print"/></svg></button>
    <button class="b" aria-label="Nastavení tisku"><svg class="ic"><use href="#pset"/></svg></button>
    <i class="sep"></i>
    <button class="b" aria-label="Předchozí"><svg class="ic"><use href="#prv"/></svg></button>
    <button class="b" aria-label="Další"><svg class="ic"><use href="#nxt"/></svg></button>
    <i class="sep"></i>
    <button class="b" aria-label="První"><svg class="ic"><use href="#fst"/></svg></button>
    <button class="b" aria-label="Poslední"><svg class="ic"><use href="#lst"/></svg></button>
    <i class="sep"></i>
    <button class="b" aria-label="Přejít"><svg class="ic"><use href="#gto"/></svg></button>
    <i class="sep"></i>
    <button class="b" aria-label="Přiblížit"><svg class="ic"><use href="#zin"/></svg></button>
    <button class="b" aria-label="Oddálit"><svg class="ic"><use href="#zou"/></svg></button>
    <i class="sep"></i>
    <button class="b" aria-label="Stránka"><svg class="ic"><use href="#pg"/></svg></button>
    <button class="b" aria-label="Záhlaví"><svg class="ic"><use href="#hd"/></svg></button>
    <button class="b" aria-label="Rozsah"><svg class="ic"><use href="#fit"/></svg></button>
    <button class="c" aria-label="Volby rozsahu"><svg><use href="#caret"/></svg></button>
    <button class="b" aria-label="Upravit"><svg class="ic"><use href="#edt"/></svg></button>
    <button class="b" aria-label="Obnovit"><svg class="ic"><use href="#ref"/></svg></button>
  </div>
  <div class="win-body">
    <aside class="nav">
      <div class="nav-head"><span>Navigátor tiského protokolu</span><button aria-label="Obnovit"><svg><use href="#res"/></svg></button><button aria-label="Zavřít"><svg><use href="#x"/></svg></button></div>
      <div class="nav-main">
        <ul class="tree">
          <li class="d3"><svg class="ti"><use href="#t"/></svg>12.6.3 Konfigurace me...</li>
          <li class="d2"><svg class="ch"><use href="#chev"/></svg><svg class="ti"><use href="#t"/></svg>12.7 Konfigurace mezního s...</li>
          <li class="d3"><svg class="ti"><use href="#t"/></svg>12.7.1 Konfigurace me...</li>
          <li class="d2"><svg class="ch"><use href="#chev"/></svg><svg class="ti"><use href="#f"/></svg>12.8 Výsledky</li>
          <li class="d3"><svg class="ti"><use href="#t"/></svg>12.8.1 Chyby &amp; upozor...</li>
          <li class="d3"><svg class="ti"><use href="#t"/></svg>12.8.2 Neplatné/Deakti...</li>
          <li class="d3"><svg class="ti"><use href="#t"/></svg>12.8.3 Využití na prute...</li>
          <li class="d3"><svg class="ti"><use href="#t"/></svg>12.8.4 Využití na ploch...</li>
          <li class="d3"><svg class="ti"><use href="#t"/></svg>12.8.5 Využití na uzlec...</li>
          <li class="d3"><svg class="ti"><use href="#t"/></svg>12.8.6 Využití na uzlec...</li>
          <li class="d3"><svg class="ti"><use href="#t"/></svg>12.8.7 Využití na ploch...</li>
          <li class="d3"><svg class="ti"><use href="#t"/></svg>12.8.8 Využití na uzlec...</li>
          <li class="d3"><svg class="ti"><use href="#t"/></svg>12.8.9 Využití na uzlec...</li>
          <li class="d3"><svg class="ti"><use href="#t"/></svg>12.8.10 Využití na uzle...</li>
          <li class="d3"><svg class="ti"><use href="#t"/></svg>12.8.11 Rozhodující vni...</li>
          <li class="d3f"><svg class="ch"><use href="#chev"/></svg><svg class="ti"><use href="#f"/></svg>12.8.12 Výztuž na prut...</li>
          <li class="d4"><svg class="ti"><use href="#t"/></svg>12.8.12.1 Nutná v...</li>
          <li class="d4"><svg class="ti"><use href="#t"/></svg>12.8.12.2 Nutná v...</li>
          <li class="d4"><svg class="ti"><use href="#t"/></svg>12.8.12.3 Navržen...</li>
          <li class="d4"><svg class="ti"><use href="#t"/></svg>12.8.12.4 Nekrytá ...</li>
          <li class="d4"><svg class="ti"><use href="#t"/></svg>12.8.12.5 Nepokry...</li>
          <li class="d4"><svg class="ti"><use href="#t"/></svg>12.8.12.6 Nepokry...</li>
          <li class="d4"><svg class="ti"><use href="#t"/></svg>12.8.12.7 Nepokry...</li>
          <li class="d4"><svg class="ti"><use href="#t"/></svg>12.8.12.8 Nepokry...</li>
          <li class="d3f"><svg class="ch"><use href="#chev"/></svg><svg class="ti"><use href="#f"/></svg>12.8.13 Výztuž na ploc...</li>
          <li class="d4"><svg class="ti"><use href="#t"/></svg>12.8.13.1 Nutná v...</li>
          <li class="d4"><svg class="ti"><use href="#t"/></svg>12.8.13.2 Nutná v...</li>
          <li class="d4"><svg class="ti"><use href="#t"/></svg>12.8.13.3 Nekrytá ...</li>
          <li class="d4"><svg class="ti"><use href="#t"/></svg>12.8.13.4 Nepokry...</li>
          <li class="d4"><svg class="ti"><use href="#t"/></svg>12.8.13.5 Nepokry...</li>
          <li class="d4"><svg class="ti"><use href="#t"/></svg>12.8.13.6 Nepokry...</li>
          <li class="d4"><svg class="ti"><use href="#t"/></svg>12.8.13.7 Nepokry...</li>
          <li class="d3f"><svg class="ch"><use href="#chev"/></svg><svg class="ti"><use href="#f"/></svg>12.8.14 Výztuž na uzlech</li>
          <li class="d4"><svg class="ti"><use href="#t"/></svg>12.8.14.1 Nutná v...</li>
          <li class="d4"><svg class="ti"><use href="#t"/></svg>12.8.14.2 Nutná v...</li>
          <li class="d4"><svg class="ti"><use href="#t"/></svg>12.8.14.3 Nutná v...</li>
          <li class="d4"><svg class="ti"><use href="#t"/></svg>12.8.14.4 Nutná v...</li>
          <li class="d4"><svg class="ti"><use href="#t"/></svg>12.8.14.5 Nutná v...</li>
          <li class="d4"><svg class="ti"><use href="#t"/></svg>12.8.14.6 Navržen...</li>
          <li class="d4"><svg class="ti"><use href="#t"/></svg>12.8.14.7 Navržen...</li>
          <li class="d4"><svg class="ti"><use href="#t"/></svg>12.8.14.8 Navržen...</li>
          <li class="d4"><svg class="ti"><use href="#t"/></svg>12.8.14.9 Navržen...</li>
          <li class="d1"><svg class="ch"><use href="#chev"/></svg><svg class="ti"><use href="#f"/></svg>13 Přehled posouzení</li>
          <li class="d2s"><span class="pick"><svg class="ti"><use href="#t"/></svg>13.1 Přehled posouzení</span></li>
        </ul>
        <div class="vs"><svg><use href="#up"/></svg><b class="t2"></b><svg><use href="#dn"/></svg></div>
      </div>
    </aside>
    <div class="doc">
      <div class="doc-row">
        <article class="page">
          <header class="ph">
            <div class="ph-l"><p>Telefon: +420 2272 0320 3<br>E-mail: info@dlubal.cz</p>
              <svg class="logo" viewBox="0 0 42 44"><circle cx="21" cy="22" r="21" fill="#1b2f7c"/><path d="M6 11h28v14H6z" fill="#fff"/><path d="M6 20h28v1.500H6zM14 12h1.500v13H14z" fill="#1b2f7c"/><path d="M6 19l9-7 12 8M15 12l7 8M15 12l18 8M15 12l-5 8" fill="none" stroke="#1b2f7c" stroke-width=".8"/><text x="20.500" y="34" text-anchor="middle">Dlubal</text></svg></div>
            <div class="ph-m"><b>Model:</b><span>Concrete design_2 (1)</span></div>
            <div class="ph-r">
              <div class="kv"><b>Datum</b><span>4.10.2021</span><b>Stránka</b><span>481/483</span></div>
              <div class="kv kv2"><b></b><em></em><b>List</b><span>1</span></div>
              <div class="big">VÝSLEDKY</div>
            </div>
          </header>
          <div class="sect"><span class="num">13.1</span><h2>PŘEHLED POSOUZENÍ</h2><h3>Přehled posouzení</h3></div>
          <table class="pt">
            <colgroup><col class="c1"><col class="c2"><col class="c3"><col class="c4"><col class="c5"><col class="c6"><col class="c7"><col class="c3"><col class="c3"><col></colgroup>
            <thead>
              <tr><th></th><th></th><th colspan="2">Objekty</th><th></th><th>Posouzení</th><th>Zatížení</th><th colspan="2">Posudek</th><th></th></tr>
              <tr><th></th><th>Addon</th><th>Typ</th><th>Č.</th><th>Poloha [m]</th><th>Situace</th><th>Č.</th><th>η [--]</th><th>Typ</th><th>Popis</th></tr>
            </thead>
            <tbody>
              <tr><td></td><td><p>železobetonov<br>ých konstrukcí</p></td><td></td><td>0</td><td></td><td></td><td></td><td></td><td></td><td><p>podrobná pravidla | Maximální<br>vzdálenost příčné výztuže podle</p></td></tr>
              <tr><td></td><td><p>Posouzení<br>železobetonov<br>ých konstrukcí</p></td><td>Prut</td><td>11</td><td>x: 1.500</td><td>NS5</td><td>KZ52</td><td><div class="r bad"><u><s style="width:100%"></s></u>1.104<svg><use href="#ng"/></svg></div></td><td>DM0209.00</td><td><p>Konstrukční uspořádání prvků a<br>podrobná pravidla | Minimální stupeň<br>smykového vyztužení podle 9.2.2(5)</p></td></tr>
              <tr><td></td><td><p>Posouzení<br>železobetonov<br>ých konstrukcí</p></td><td>Prut</td><td>10</td><td>x: 0.125</td><td>NS5</td><td>KZ52</td><td><div class="r bad"><u><s style="width:100%"></s></u>1.071<svg><use href="#ng"/></svg></div></td><td>DM0200.00</td><td><p>Konstrukční uspořádání prvků a<br>podrobná pravidla | Minimální výztuž<br>tažených ploch podle 9.2.1.1(1)</p></td></tr>
              <tr><td></td><td><p>Posouzení<br>železobetonov<br>ých konstrukcí</p></td><td>Prut</td><td>1-28</td><td>x: 0.000</td><td>NS5</td><td>KZ52</td><td><div class="r"><u><s style="width:100%"></s></u>1.000<svg><use href="#ok"/></svg></div></td><td>DC0400.00</td><td><p>Trvanlivost a krycí betonová vrstva<br>výztuže | Betonová krycí vrstva podle<br>4.4.1</p></td></tr>
              <tr><td></td><td><p>Posouzení<br>železobetonov<br>ých konstrukcí</p></td><td>Prut</td><td>1-9,12-20</td><td>x: 0.000</td><td>NS5</td><td>KZ52</td><td><div class="r"><u><s style="width:100%"></s></u>1.000<svg><use href="#ok"/></svg></div></td><td>DM0216.00</td><td><p>Konstrukční uspořádání prvků a<br>podrobná pravidla | Minimální počet<br>podélných prutů umístěných v průřezu<br>podle 9.5.2(4)</p></td></tr>
              <tr><td></td><td><p>Posouzení<br>železobetonov<br>ých konstrukcí</p></td><td>Prut</td><td>1-28</td><td>x: 0.000</td><td>NS5</td><td>KZ52</td><td><div class="r"><u><s style="width:100%"></s></u>1.000<svg><use href="#ok"/></svg></div></td><td>DR0500.00</td><td><p>Konstrukční uspořádání výztuže |<br>Kotevní délka třmínků a smykové<br>výztuže podle 8.5(2)</p></td></tr>
              <tr><td></td><td><p>Posouzení<br>železobetonov<br>ých konstrukcí</p></td><td>Prut</td><td>21</td><td>x: 0.125</td><td>NS5</td><td>KZ52</td><td><div class="r"><u><s style="width:78%"></s></u>0.785<svg><use href="#ok"/></svg></div></td><td>UL0200.02</td><td><p>Mezní stav únosnosti | Smyková<br>únosnost - smyková únosnost výztuže<br>podle 6.2</p></td></tr>
              <tr><td></td><td><p>Posouzení<br>železobetonov<br>ých konstrukcí</p></td><td>Prut</td><td>13,17</td><td>x: 0.000</td><td>NS5</td><td>KZ52</td><td><div class="r"><u><s style="width:75%"></s></u>0.750<svg><use href="#ok"/></svg></div></td><td>DM0217.00</td><td><p>Konstrukční uspořádání prvků a<br>podrobná pravidla | Minimální průměr<br>příčné výztuže podle 9.5.3(1)</p></td></tr>
              <tr><td></td><td><p>Posouzení<br>železobetonov<br>ých konstrukcí</p></td><td>Prut</td><td>1-9,12-20</td><td>x: 0.000</td><td>NS5</td><td>KZ52</td><td><div class="r"><u><s style="width:63%"></s></u>0.625<svg><use href="#ok"/></svg></div></td><td>DR0800.00</td><td><p>Konstrukční uspořádání výztuže |<br>Doplňující pravidla pro pruty velkých<br>průměrů d<small>s,large</small> podle 8.8(1)</p></td></tr>
              <tr><td></td><td><p>Posouzení<br>železobetonov<br>ých konstrukcí</p></td><td>Prut</td><td>10,21,26</td><td>x: 0.000</td><td>NS5</td><td>KZ52</td><td><div class="r"><u><s style="width:60%"></s></u>0.603<svg><use href="#ok"/></svg></div></td><td>DR0200.00</td><td><p>Konstrukční uspořádání výztuže |<br>Vzdálenost prutů podle 8.2(2)</p></td></tr>
              <tr><td></td><td><p>Posouzení<br>železobetonov<br>ých konstrukcí</p></td><td>Prut</td><td>1-9,12-20</td><td>x: 0.000</td><td>NS5</td><td>KZ52</td><td><div class="r"><u><s style="width:60%"></s></u>0.600<svg><use href="#ok"/></svg></div></td><td>DM0213.00</td><td><p>Konstrukční uspořádání prvků a<br>podrobná pravidla | Minimální průměr<br>podélné výztuže podle 9.5.2(1)</p></td></tr>
              <tr><td></td><td><p>Posouzení<br>železobetonov<br>ých konstrukcí</p></td><td>Prut</td><td>25</td><td>x: 0.500</td><td>NS5</td><td>KZ52</td><td><div class="r"><u><s style="width:56%"></s></u>0.562<svg><use href="#ok"/></svg></div></td><td>DM0205.00</td><td><p>Konstrukční uspořádání prvků a<br>podrobná pravidla | Pravidlo o posunutí<br>pro podélnou tahovou výztuž podle<br>9.2.1.3(2)</p></td></tr>
              <tr><td></td><td><p>Posouzení<br>železobetonov<br>ých konstrukcí</p></td><td>Prut</td><td>24</td><td>x: 5.500</td><td>NS5</td><td>KZ52</td><td><div class="r"><u><s style="width:55%"></s></u>0.548<svg><use href="#ok"/></svg></div></td><td>UL0100.00</td><td><p>Mezní stav únosnosti | Únosnost<br>průřezu podle 6.1</p></td></tr>
              <tr><td></td><td><p>Posouzení<br>železobetonov<br>ých konstrukcí</p></td><td>Prut</td><td>10,11,21,22,24-27</td><td>x: 0.000</td><td>NS5</td><td>KZ52</td><td><div class="r"><u><s style="width:54%"></s></u>0.545<svg><use href="#ok"/></svg></div></td><td>DM0210.00</td><td><p>Konstrukční uspořádání prvků a<br>podrobná pravidla | Maximální podélná<br>vzdálenost mezi sestavami třmínkové<br>výztuže podle 9.2.2(6)</p></td></tr>
              <tr><td></td><td><p>Posouzení<br>železobetonov<br>ých konstrukcí</p></td><td>Prut</td><td>24</td><td>x: 2.000</td><td>NS4</td><td>KZ16</td><td><div class="r"><u><s style="width:36%"></s></u>0.364<svg><use href="#ok"/></svg></div></td><td>SE0301.00</td><td><p>Použitelnost | Omezení trhlin - omezení<br>tvorby trhlin bez přímého výpočtu -<br>maximální průměr výztuže podle</p></td></tr>
              <tr><td></td><td><p>Posouzení<br>železobetonov<br>ých konstrukcí</p></td><td>Prut</td><td>26</td><td>x: 2.000</td><td>NS4</td><td>KZ16</td><td><div class="r"><u><s style="width:34%"></s></u>0.336<svg><use href="#ok"/></svg></div></td><td>SE0303.00</td><td><p>Použitelnost | Omezení vzniku trhlin -<br>výpočet šířek trhlin podle 7.3.4</p></td></tr>
              <tr><td></td><td><p>Posouzení<br>železobetonov<br>ých konstrukcí</p></td><td>Prut</td><td>1-28</td><td>x: 0.000</td><td>NS5</td><td>KZ52</td><td><div class="r"><u><s style="width:30%"></s></u>0.300<svg><use href="#ok"/></svg></div></td><td>MA0100.00</td><td><p>Validita materiálu | Maximální hodnota<br>pevnostní třídy betonu (C<small>max</small>) podle<br>3.1.2(2)</p></td></tr>
              <tr><td></td><td><p>Posouzení<br>železobetonov<br>ých konstrukcí</p></td><td>Prut</td><td>10,11,21-28</td><td>x: 0.000</td><td>NS5</td><td>KZ52</td><td><div class="r"><u><s style="width:28%"></s></u>0.276<svg><use href="#ok"/></svg></div></td><td>DM0211.00</td><td><p>Konstrukční uspořádání prvků a<br>podrobná pravidla | Minimální příčná<br>osová vzdálenost větví třmínků v<br>průřezu podle 9.2.2(8)</p></td></tr>
              <tr><td></td><td><p>Posouzení<br>železobetonov<br>ých konstrukcí</p></td><td>Prut</td><td>1-9,12-20</td><td>x: 0.000</td><td>NS5</td><td>KZ52</td><td><div class="r"><u><s style="width:23%"></s></u>0.233<svg><use href="#ok"/></svg></div></td><td>DM0215.00</td><td><p>Konstrukční uspořádání prvků a<br>podrobná pravidla | Maximální plocha<br>podélné výztuže podle 9.5.2(3)</p></td></tr>
              <tr><td></td><td><p>Posouzení<br>železobetonov</p></td><td>Prut</td><td>24,26</td><td>x: 2.000</td><td>NS4</td><td>KZ16</td><td><div class="r"><u><s style="width:21%"></s></u>0.207<svg><use href="#ok"/></svg></div></td><td>SE0302.00</td><td><p>Použitelnost | Omezení trhlin - omezení<br>tvorby trhlin bez přímého výpočtu -</p></td></tr>
            </tbody>
          </table>
        </article>
        <div class="vs"><svg><use href="#up"/></svg><b class="t3"></b><svg><use href="#dn"/></svg></div>
      </div>
      <div class="hs"><svg><use href="#lf"/></svg><b class="h2"></b><svg><use href="#rt"/></svg></div>
    </div>
  </div>
  <footer class="win-status"><span>VÝSLEDKY</span><span>Stránky: 483</span><span>Stránka: 481</span></footer>
</section>

<aside class="panel">
  <header class="p-title">Ovládací panel<button aria-label="Zavřít">x</button></header>
  <h1>Posouzení železobetonových konstrukcí | Posouzení po uzlech</h1>
  <div class="p-body">
    <ol class="vals"><li>1.100</li><li>1.000</li><li>0.900</li><li>0.800</li><li>0.700</li><li>0.600</li><li>0.500</li><li>0.400</li><li>0.300</li><li>0.200</li><li>0.100</li><li>0.000</li></ol>
    <div class="sw"><i class="k1"></i><i class="k2"></i><i class="k3"></i><i class="k4"></i><i class="k5"></i><i class="k6"></i><i class="k7"></i><i class="k8"></i><i class="k9"></i><i class="k10"></i><i class="k11"></i></div>
    <ol class="pct"><li>0.00 %</li><li>0.00 %</li><li>0.00 %</li><li>0.00 %</li><li>20.00 %</li><li>0.00 %</li><li>30.00 %</li><li>20.00 %</li><li>20.00 %</li><li>0.00 %</li><li>10.00 %</li></ol>
    <div class="range"><input type="range" min="0" max="100" value="100" aria-label="Horní mez"><input type="range" min="0" max="100" value="0" aria-label="Dolní mez"></div>
  </div>
  <div class="p-foot"><button class="fb" aria-label="Možnosti"><svg class="ic"><use href="#box"/></svg></button><button class="fb act" aria-label="Stupnice"><svg class="ic"><use href="#rng"/></svg></button></div>
  <div class="p-tabs"><button class="cur" aria-label="Barvy"><svg class="ic"><use href="#scl"/></svg></button><button aria-label="Průběhy"><svg class="ic"><use href="#sc2"/></svg></button><button aria-label="Faktory"><svg class="ic"><use href="#bal"/></svg></button><button aria-label="Filtr"><svg class="ic"><use href="#mv"/></svg></button></div>
</aside>
</body>
</html>
```
FILE: styles.css
```css
* { box-sizing: border-box; }
html, body { height: 100%; }
body { margin: 0; font: 8px/12px "Open Sans", "Noto Sans", sans-serif; color: #222; overflow: hidden; }
button { border: 0; padding: 0; background: none; font: inherit; color: inherit; }
a { color: inherit; text-decoration: none; }
ul, ol { list-style: none; margin: 0; padding: 0; }
svg { display: block; flex: none; }
.defs { position: absolute; width: 0; height: 0; }
.ic { width: 15px; height: 15px; }

.app { height: 100vh; display: flex; flex-direction: column; background: #f7f7f7; border-top: 1px solid #6d6680; }
.app-title { display: flex; align-items: center; gap: 2px; height: 22px; padding-left: 5px; background: #fff; color: #999; flex: none; }
.menu { display: flex; align-items: center; flex: none; }
.app-menu { height: 15px; gap: 12px; }
.flag { width: 12px; height: 9px; margin-right: -6px; }

.bar { display: flex; align-items: center; height: 20px; flex: none; }
.b { width: 19px; height: 18px; display: grid; place-items: center; flex: none; }
.on { background: #cce4f7; border: 1px solid #a8d0f0; }
.c { width: 9px; height: 18px; display: grid; place-items: center; flex: none; }
.c svg { width: 7px; height: 7px; }
.grip { width: 8px; height: 14px; flex: none; border-left: 2px dotted #bbb; }
.bar > .grip:first-child { margin-left: 4px; width: 4px; }
.bar > .tight:first-child { width: 2px; }
.sep { width: 5px; height: 14px; flex: none; background: linear-gradient(90deg, transparent 2px, #ccc 2px, #ccc 3px, transparent 3px); }
.combo { display: flex; align-items: center; background: #e8e8f4; height: 16px; width: 197px; flex: none; padding: 0 3px 0 4px; }
.uls { background: #cc6565; color: #fff; padding: 0 4px; line-height: 11px; }
.ns { width: 44px; margin-left: 4px; border-right: 1px solid #ccd; }
.combo select { appearance: none; border: 0; background: none; font: inherit; color: inherit; flex: 1; min-width: 0; padding: 0 0 0 4px; }
.combo svg { width: 8px; height: 8px; }
.arw { width: 11px; height: 16px; background: #e8e8f4; margin-left: 1px; display: grid; place-items: center; flex: none; }
.arw svg { width: 7px; height: 7px; }
.more { margin-left: auto; padding-right: 2px; }

.work { flex: 1; min-height: 0; display: grid; grid-template-columns: 697px minmax(0, 1fr); }
.dock { background: #dcdce2; }
.side { display: flex; flex-direction: column; min-height: 0; min-width: 0; border-right: 1px solid #aaa; }
.view { flex: 1; min-height: 0; overflow: hidden; }
.view svg { width: 100%; height: 100%; }
.lab { fill: #e58a64; font-size: 8px; }
.lim { fill: #000; font-size: 8px; }
.res { display: flex; flex-direction: column; height: 191px; flex: none; }
.res-head { height: 19px; background: #d9e6f3; display: flex; justify-content: flex-end; align-items: center; gap: 6px; padding-right: 4px; flex: none; border-top: 1px solid #eee; }
.res-head svg, .nav-head svg { width: 10px; height: 10px; }
.res-bar { padding: 0 0 0 2px; height: 20px; margin-top: 14px; }
.res-bar .ic { width: 14px; height: 14px; }
.grid-wrap { display: flex; flex: 1; min-height: 0; background: #fff; }
.rt { flex: 1; width: 0; table-layout: fixed; border-collapse: collapse; align-self: flex-start; font-size: 8px; }
.r0 { width: 30px; } .r1 { width: 73px; } .r2 { width: 88px; }
.rt th { font-weight: 400; padding: 0; background: #f5f5f5; border-right: 1px solid #ddd; text-align: center; white-space: nowrap; line-height: 12px; }
.rt .strip th { height: 6px; line-height: 5px; background: #e8e8e8; border: 1px solid #fff; }
.rt .strip .dk { background: #c9c9c9; }
.rt .lft { text-align: left; }
.rt small { font-size: 6px; }
.rt sup { font-size: 6px; line-height: 0; }
.rt td { padding: 0; height: 12px; line-height: 11px; border: 1px solid #ddd; border-width: 0 1px 1px 0; text-align: right; white-space: nowrap; }
.rt td i { display: inline-block; width: 12px; height: 7px; vertical-align: middle; }
.rt td:first-child i { width: 12px; }
.rt td .m { background: linear-gradient(#888 3px, transparent 3px, transparent 4px, #33f 4px) no-repeat 5px 0 / 4px 7px; }
.rt .cur { background: #0a78d6; color: #fff; }

.vs { width: 13px; background: #f0f0f0; display: flex; flex-direction: column; align-items: center; flex: none; }
.vs svg, .hs svg { width: 10px; height: 10px; }
.vs b { width: 11px; background: #cdcdcd; }
.vs svg:last-child { margin-top: auto; }
.vs .t1 { height: 13px; margin-top: 3px; }
.vs .t2 { height: 261px; margin-top: auto; }
.vs .t2 + svg, .vs .t3 + svg { margin-top: 3px; }
.vs .t3 { height: 14px; margin-top: auto; }
.hs { height: 12px; background: #f0f0f0; display: flex; align-items: center; flex: none; padding-right: 12px; }
.hs b { height: 10px; width: 171px; background: #cdcdcd; margin-right: auto; }
.tabs { height: 18px; display: flex; align-items: center; flex: none; overflow: hidden; white-space: nowrap; }
.tabs a { border-right: 1px solid #ccc; padding: 0 5px; line-height: 14px; }
.tabs a:first-child { padding-left: 0; }
.tabs a:nth-child(4) { border: 0; padding-right: 0; }
.tn { margin-left: auto; color: #888; font-size: 9px; }
.k { color: #000; margin-left: 1px; padding-right: 2px; }
.status { height: 18px; display: flex; align-items: center; flex: none; white-space: nowrap; }
.status span { height: 14px; padding: 0 3px; border-right: 1px solid #ddd; line-height: 14px; margin-right: 1px; flex: none; }
.status .s-lead { width: 382px; }
.status .bx { border: 1px solid #ddd; line-height: 12px; background: #f0f0f0; }
.status .w76 { width: 76px; } .status .w80 { width: 79px; } .status .w112 { width: 111px; padding: 0; border-right: 1px solid #ddd; } .status .w48 { width: 47px; } .status .w56 { width: 55px; }

.win { position: absolute; left: 5px; top: 78px; right: 327px; bottom: 16px; display: flex; flex-direction: column; background: #f7f7f7; border: 1px solid #777; border-left-color: #aaa; box-shadow: 1px 2px 5px #0007; }
.win-title { height: 20px; display: flex; align-items: center; background: #fff; padding: 0 11px 0 3px; flex: none; }
.win-title span { flex: 1; margin-left: 2px; }
.win-title button { margin-left: 24px; }
.win-title svg:not(.ic) { width: 10px; height: 10px; }
.win-menu { height: 16px; gap: 12px; padding-left: 5px; border-bottom: 1px solid #e8e8e8; }
.win-bar { height: 20px; }
.win-body { flex: 1; min-height: 0; display: flex; background: #fff; }
.nav { width: 180px; flex: none; display: flex; flex-direction: column; background: #fff; }
.nav-head { height: 16px; background: #d9e6f3; display: flex; align-items: center; gap: 6px; padding: 0 4px; font: bold 9px/14px "DejaVu Sans Condensed", "DejaVu Sans", sans-serif; color: #444; flex: none; white-space: nowrap; }
.nav-head span { flex: 1; }
.nav-main { flex: 1; min-height: 0; display: flex; }
.tree { flex: 1; min-width: 0; display: flex; flex-direction: column; padding-bottom: 8px; font: 8px/12px "DejaVu Sans Condensed", "DejaVu Sans", sans-serif; }
.tree li, .pick { flex: 1; display: flex; align-items: center; white-space: nowrap; min-height: 0; }
.ti { width: 12px; height: 10px; margin-right: 3px; }
.ch { width: 8px; height: 8px; margin-right: 7px; }
.d1 { padding-left: 16px; } .d2 { padding-left: 31px; } .d2s { padding-left: 43px; } .d3 { padding-left: 60px; } .d3f { padding-left: 45px; } .d4 { padding-left: 75px; }
.pick { background: #cce8ff; height: 13px; padding-left: 2px; }

.doc { flex: 1; min-width: 0; margin-left: 4px; display: flex; flex-direction: column; }
.doc-row { flex: 1; min-height: 0; display: flex; }
.page { flex: 1; min-width: 0; overflow: hidden; padding: 10px 7px 0 13px; font-family: "Liberation Sans", sans-serif; }
.ph { display: flex; height: 59px; border-bottom: 2px solid #666; font: bold 6px/8px Lato, sans-serif; color: #111; }
.ph-l { width: 157px; display: flex; align-items: flex-start; font-size: 5px; line-height: 7px; flex: none; }
.ph-l p { margin: 35px 0 0; flex: 1; white-space: nowrap; }
.logo { width: 42px; height: 44px; margin-right: 12px; }
.logo text { fill: #fff; font: bold 8px "Noto Sans", sans-serif; }
.ph-m { flex: 1; border: solid #555; border-width: 0 1px; padding: 1px 10px; display: flex; align-items: flex-start; gap: 5px; }
.ph-m span { flex: 1; background: #e1f3fd; padding-left: 2px; line-height: 8px; }
.ph-r { width: 110px; padding: 1px 0 0 11px; flex: none; }
.kv { display: grid; grid-template-columns: 15px 32px 20px 32px; line-height: 8px; font-size: 5px; }
.kv b:nth-child(3) { padding-left: 4px; font-size: 4px; }
.kv span { background: #e1f3fd; text-align: center; font-size: 6px; }
.kv2 { margin-top: 3px; }
.big { margin-top: 8px; border: 1px solid #e4f3fc; height: 23px; display: grid; place-items: center; font: 900 8px/10px Lato, sans-serif; }
.sect { display: flex; align-items: center; margin: 16px 0 6px; height: 11px; font-family: Lato, sans-serif; }
.num { width: 23px; background: #e28a0c; color: #fff; text-align: center; font-size: 6px; line-height: 8px; font-weight: 700; }
.sect h2, .sect h3 { margin: 0; font-size: 8px; line-height: 11px; font-weight: 900; color: #000; }
.sect h2 { margin-left: 9px; flex: 1; }
.pt { width: 100%; table-layout: fixed; border-collapse: separate; border-spacing: 0; font-size: 6px; line-height: 8px; border-top: 1px solid #bbb; color: #333; }
.c1 { width: 33px; } .c2 { width: 42px; } .c3 { width: 43px; } .c4 { width: 52px; } .c5 { width: 56px; } .c6 { width: 29px; } .c7 { width: 28px; }
.pt th { background: #eff8fe; padding: 0; font-weight: 700; white-space: nowrap; border-right: 1px solid #ccc; line-height: 7px; }
.pt thead tr:last-child th { border-bottom: 1px solid #bbb; }
.pt td { padding: 0 2px; vertical-align: top; white-space: nowrap; border-right: 1px solid #d0d0d0; text-align: left; }
.pt tbody tr:nth-child(even) td { background: #f2f2f2; }
.pt tbody td:first-child { background: #f0f9ff; border-left: 1px solid #d0d0d0; }
.pt tbody tr:nth-child(even) td:first-child { background: #e4f3fd; }
.pt td:nth-child(5), .pt td:nth-child(6), .pt td:nth-child(7) { text-align: center; }
.pt td:nth-child(9) { text-align: right; }
.pt p { margin: 0 0 -1px; }
.pt small { font-size: 4px; line-height: 0; }
.r { display: flex; align-items: center; justify-content: flex-end; height: 8px; }
.r u { flex: 1; height: 5px; display: block; margin-right: 1px; }
.r s { display: block; height: 5px; background: #c5f3c5; }
.bad s { background: #f9aaaa; }
.r svg { width: 6px; height: 6px; margin-left: 2px; }
.hs .h2 { flex: 1; max-width: 414px; margin-left: 28px; }
.doc .hs { padding: 0 13px 0 2px; }
.win-status { height: 12px; background: linear-gradient(#b9cde2, #a3b9d1); display: flex; justify-content: flex-end; align-items: center; gap: 30px; padding-right: 31px; font: 8px/12px "DejaVu Sans Condensed", "DejaVu Sans", sans-serif; flex: none; border-top: 1px solid #999; }
.win-status span:last-child { margin-left: -9px; }

.panel { position: absolute; right: 7px; top: 0; width: 264px; background: #fff; box-shadow: 0 2px 7px #0008; border: 1px solid #ddd; border-top: 0; }
.p-title { height: 21px; border-bottom: 1px solid #d8d8e0; display: flex; align-items: center; justify-content: space-between; color: #999; font-size: 9px; padding: 0 1px 0 5px; }
.p-title button { width: 14px; height: 14px; background: #e3e3e3; color: #fff; line-height: 12px; }
.panel h1 { margin: 0; height: 30px; padding: 2px 7px; font-size: 8px; line-height: 13px; font-weight: 600; white-space: nowrap; }
.p-body { background: #f5f5f5; display: flex; height: 242px; padding: 8px 0 0 76px; line-height: 19px; font-size: 8px; }
.vals { width: 20px; margin-top: -4px; text-align: right; }
.vals li, .pct li { height: 19px; white-space: nowrap; }
.sw { width: 30px; margin: 5px 0 0 10px; }
.sw i { display: block; height: 18px; margin-bottom: 1px; }
.k1 { background: #b80000; } .k2 { background: #da8000; } .k3 { background: #ffaa00; } .k4 { background: #cfcf00; } .k5 { background: #ffff00; } .k6 { background: #00f900; } .k7 { background: #00e584; } .k8 { background: #00f5fa; } .k9 { background: #0a98ff; } .k10 { background: #0000ff; } .k11 { background: #0000a0; }
.pct { width: 38px; margin-top: 5px; text-align: right; }
.range { display: grid; width: 16px; height: 218px; margin-left: 4px; background: linear-gradient(#dde0e2, #dde0e2) no-repeat 7px 0 / 3px 100%; }
.range input { grid-area: 1 / 1; appearance: none; writing-mode: vertical-lr; direction: rtl; width: 16px; height: 218px; margin: 0; background: none; }
.range input::-webkit-slider-thumb { appearance: none; width: 16px; height: 8px; background: #0a78d6; }
.p-foot { height: 24px; display: flex; justify-content: flex-end; align-items: center; gap: 4px; padding-right: 5px; }
.fb { width: 18px; height: 16px; background: #cfe6f8; display: grid; place-items: center; }
.fb .ic, .p-tabs .ic { width: 13px; height: 13px; }
.act { border: 1px solid #2b79b8; }
.p-tabs { display: flex; height: 18px; background: #f7f7f7; border-top: 1px solid #ddd; }
.p-tabs button { width: 28px; display: grid; place-items: center; border-right: 1px solid #ccc; background: #f0f0f0; }
.p-tabs .cur { background: #fff; }
```
